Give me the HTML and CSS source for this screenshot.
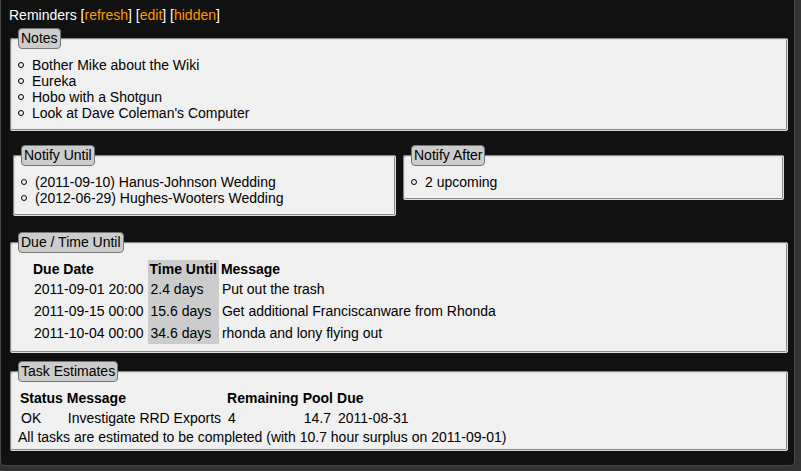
FILE: index.html
```html
<!DOCTYPE html>
<html lang="en">
<head>
    <meta charset="UTF-8">
    <title>Reminders</title>
    <link rel="stylesheet" href="styles.css">
</head>
<body>
    <div class="reminders">
        <div class="title">Reminders [<a href="#">refresh</a>] [<a href="#">edit</a>] [<a href="#">hidden</a>]</div>

        <!-- notes -->
        <fieldset class="box list-box notes">
            <legend>Notes</legend>
            <ul class="bullets">
                <li>Bother Mike about the Wiki</li>
                <li>Eureka</li>
                <li>Hobo with a Shotgun</li>
                <li>Look at Dave Coleman's Computer</li>
            </ul>
        </fieldset>

        <div class="notify-row">
            <fieldset class="box list-box notify-until">
                <legend>Notify Until</legend>
                <ul class="bullets">
                    <li>(2011-09-10) Hanus-Johnson Wedding</li>
                    <li>(2012-06-29) Hughes-Wooters Wedding</li>
                </ul>
            </fieldset>
            <fieldset class="box list-box notify-after">
                <legend>Notify After</legend>
                <ul class="bullets">
                    <li>2 upcoming</li>
                </ul>
            </fieldset>
        </div>

        <!-- due dates -->
        <fieldset class="box due">
            <legend>Due / Time Until</legend>
            <table class="grid due-table">
                <tr>
                    <th>Due Date</th>
                    <th class="until">Time Until</th>
                    <th>Message</th>
                </tr>
                <tr>
                    <td>2011-09-01 20:00</td>
                    <td class="until">2.4 days</td>
                    <td>Put out the trash</td>
                </tr>
                <tr>
                    <td>2011-09-15 00:00</td>
                    <td class="until">15.6 days</td>
                    <td>Get additional Franciscanware from Rhonda</td>
                </tr>
                <tr>
                    <td>2011-10-04 00:00</td>
                    <td class="until">34.6 days</td>
                    <td>rhonda and lony flying out</td>
                </tr>
            </table>
        </fieldset>

        <!-- task estimates -->
        <fieldset class="box tasks">
            <legend>Task Estimates</legend>
            <table class="grid task-table">
                <tr>
                    <th>Status</th>
                    <th>Message</th>
                    <th>Remaining</th>
                    <th>Pool</th>
                    <th>Due</th>
                </tr>
                <tr>
                    <td>OK</td>
                    <td>Investigate RRD Exports</td>
                    <td>4</td>
                    <td>14.7</td>
                    <td>2011-08-31</td>
                </tr>
            </table>
            <div class="summary">All tasks are estimated to be completed (with 10.7 hour surplus on 2011-09-01)</div>
        </fieldset>
    </div>
</body>
</html>
```

FILE: styles.css
```css
body {
    margin: 0;
    background: #333;
    font-family: "Liberation Sans", Arial, sans-serif;
    font-size: 14px;
    line-height: 16px;
}

/* outer dark panel */
.reminders {
    box-sizing: border-box;
    width: 795px;
    background: #111;
    border: 1px solid #474747;
    border-top: none;
    border-radius: 0 0 5px 5px;
    padding-bottom: 14px;
}

.title {
    color: #fff;
    line-height: 17px;
    padding: 7px 8px 4px;
}

.title a {
    color: #f90;
    text-decoration: none;
}

/* fieldset boxes */
.box {
    margin: 0 6px 0 9px;
    padding: 7px 6px 8px;
    min-width: 0;
    border: 2px groove #ddd;
    border-radius: 3px;
    background: #f0f0f0;
    color: #000;
}

.box legend {
    background: #ccc;
    border: 1px solid #777;
    border-radius: 4px;
    padding: 1px 2px;
    line-height: 17px;
}

.list-box {
    padding-top: 8px;
}

.bullets {
    list-style: none;
    margin: 0;
    padding: 0;
}

.bullets li::before {
    content: "";
    display: inline-block;
    width: 4px;
    height: 4px;
    border: 1px solid #000;
    border-radius: 50%;
    margin-right: 8px;
    vertical-align: 2px;
}

.notify-row {
    display: flex;
    align-items: flex-start;
    margin-top: 14px;
}

.notify-until {
    box-sizing: border-box;
    width: 383px;
    margin: 0 0 0 12px;
}

.notify-after {
    box-sizing: border-box;
    width: 381px;
    margin: 0 0 0 7px;
}

.due {
    margin-top: 16px;
    padding-bottom: 7px;
}

.tasks {
    margin-top: 8px;
    padding-bottom: 4px;
}

/* tables */
.grid {
    border-collapse: collapse;
}

.grid th {
    text-align: left;
    padding: 1px 2px;
}

.grid td {
    padding: 3px 4px 3px 3px;
}

.until {
    background: #ccc;
}

.due-table {
    margin-left: 13px;
}
```
